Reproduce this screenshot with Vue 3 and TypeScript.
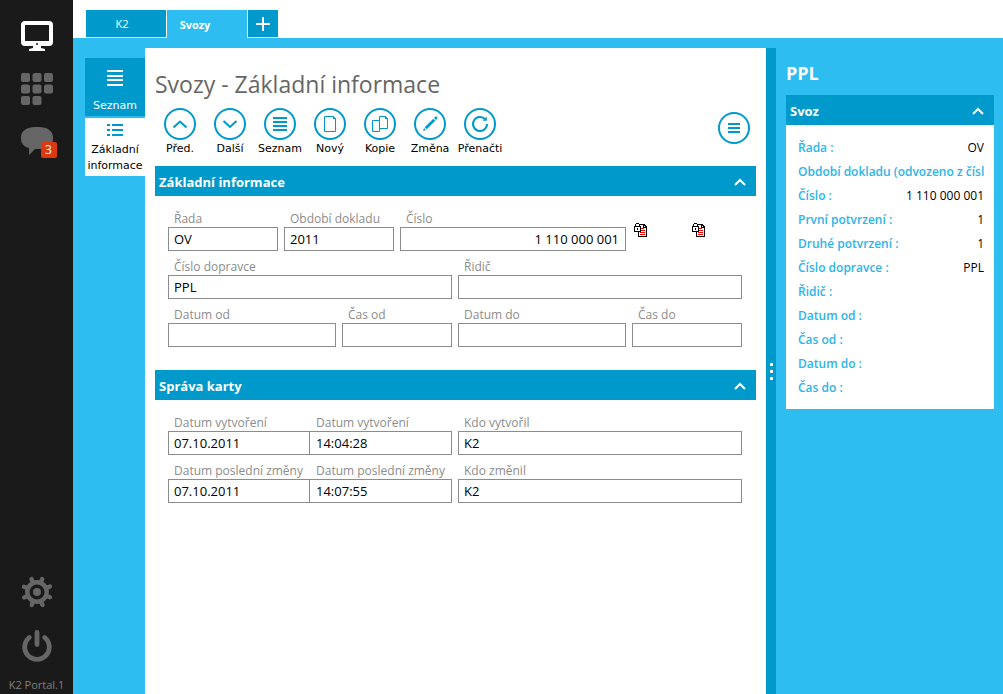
<script setup lang="ts">
import { ref } from 'vue'

interface Field {
  id: string
  label: string
  value: string
  span: string
  numeric?: boolean
}

interface Tool {
  name: string
  label: string
}

interface Detail {
  label: string
  value: string
}

const tools: Tool[] = [
  { name: 'up', label: 'Před.' },
  { name: 'down', label: 'Další' },
  { name: 'list', label: 'Seznam' },
  { name: 'new', label: 'Nový' },
  { name: 'copy', label: 'Kopie' },
  { name: 'edit', label: 'Změna' },
  { name: 'reload', label: 'Přenačti' },
]

const basicFields = ref<Field[]>([
  { id: 'rada', label: 'Řada', value: 'OV', span: 's2' },
  { id: 'obdobi', label: 'Období dokladu', value: '2011', span: 's2' },
  { id: 'cislo', label: 'Číslo', value: '1 110 000 001', span: 's4', numeric: true },
])

const planFields = ref<Field[]>([
  { id: 'dopravce', label: 'Číslo dopravce', value: 'PPL', span: 's5' },
  { id: 'ridic', label: 'Řidič', value: '', span: 's5' },
  { id: 'datum-od', label: 'Datum od', value: '', span: 's3' },
  { id: 'cas-od', label: 'Čas od', value: '', span: 's2' },
  { id: 'datum-do', label: 'Datum do', value: '', span: 's3' },
  { id: 'cas-do', label: 'Čas do', value: '', span: 's2' },
])

const auditRows = ref([
  {
    stamps: [
      { id: 'vytvoreni-datum', label: 'Datum vytvoření', value: '07.10.2011' },
      { id: 'vytvoreni-cas', label: 'Datum vytvoření', value: '14:04:28' },
    ],
    user: { id: 'vytvoril', label: 'Kdo vytvořil', value: 'K2' },
  },
  {
    stamps: [
      { id: 'zmena-datum', label: 'Datum poslední změny', value: '07.10.2011' },
      { id: 'zmena-cas', label: 'Datum poslední změny', value: '14:07:55' },
    ],
    user: { id: 'zmenil', label: 'Kdo změnil', value: 'K2' },
  },
])

const details: Detail[] = [
  { label: 'Řada :', value: 'OV' },
  { label: 'Období dokladu (odvozeno z čísla) :', value: '' },
  { label: 'Číslo :', value: '1 110 000 001' },
  { label: 'První potvrzení :', value: '1' },
  { label: 'Druhé potvrzení :', value: '1' },
  { label: 'Číslo dopravce :', value: 'PPL' },
  { label: 'Řidič :', value: '' },
  { label: 'Datum od :', value: '' },
  { label: 'Čas od :', value: '' },
  { label: 'Datum do :', value: '' },
  { label: 'Čas do :', value: '' },
]

const gearAngles = [22, 67, 112, 157, 202, 247, 292, 337]
</script>

<template>
  <div class="app">
    <nav class="rail" aria-label="Portál">
      <button class="rail-btn" type="button" aria-label="Plocha">
        <svg width="32" height="30" viewBox="0 0 32 30">
          <path fill="#fff" fill-rule="evenodd" d="M4 0h24a4 4 0 0 1 4 4v17a4 4 0 0 1-4 4h-8v2l4 1v2H8v-2l4-1v-2H4a4 4 0 0 1-4-4V4a4 4 0 0 1 4-4zM4 4v16h24V4z" />
          <circle cx="16" cy="23" r="1" fill="#1a1a1a" />
        </svg>
      </button>
      <button class="rail-btn" type="button" aria-label="Aplikace">
        <svg width="32" height="32" viewBox="0 0 32 32" fill="#666">
          <rect x="0" y="0" width="9" height="9" rx="2" /><rect x="11.500" y="0" width="9" height="9" rx="2" /><rect x="23" y="0" width="9" height="9" rx="2" />
          <rect x="0" y="11.500" width="9" height="9" rx="2" /><rect x="11.500" y="11.500" width="9" height="9" rx="2" /><rect x="23" y="11.500" width="9" height="9" rx="2" />
          <rect x="0" y="23" width="9" height="9" rx="2" /><rect x="11.500" y="23" width="9" height="9" rx="2" />
        </svg>
      </button>
      <button class="rail-btn" type="button" aria-label="Zprávy">
        <svg width="32" height="28" viewBox="0 0 32 28">
          <path fill="#666" d="M14 0h4c8 0 14 4 14 10v2c0 6-5 10-13 10h-5l-6 6v-7c-5-1-8-5-8-9v-2C0 4 6 0 14 0z" />
        </svg>
        <span class="badge">3</span>
      </button>
      <div class="rail-fill"></div>
      <button class="rail-btn" type="button" aria-label="Nastavení">
        <svg width="32" height="32" viewBox="0 0 32 32" fill="none" stroke="#666">
          <circle cx="16" cy="16" r="9.700" stroke-width="4.400" />
          <g stroke-width="4.400" stroke-linecap="round">
            <path v-for="a in gearAngles" :key="a" d="M16 5V2" :transform="`rotate(${a} 16 16)`" />
          </g>
          <circle cx="16" cy="16" r="4" fill="#666" stroke="none" />
        </svg>
      </button>
      <button class="rail-btn" type="button" aria-label="Odhlásit">
        <svg width="32" height="32" viewBox="0 0 32 32" fill="none" stroke="#666" stroke-width="4.800" stroke-linecap="round">
          <path d="M8.300 7.500a12.300 12.300 0 1 0 15.400 0M16 2.400v12.200" />
        </svg>
      </button>
      <span class="version">K2 Portal.1</span>
    </nav>

    <div class="work">
      <header class="tabs">
        <button class="tab" type="button">K2</button>
        <button class="tab active" type="button">Svozy</button>
        <button class="tab add" type="button" aria-label="Nová záložka">
          <svg width="14" height="14" viewBox="0 0 14 14" fill="#fff"><path d="M6 0h2v6h6v2H8v6H6V8H0V6h6z" /></svg>
        </button>
      </header>

      <div class="stage">
        <nav class="views" aria-label="Pohledy">
          <button class="view dark" type="button">
            <svg width="16" height="16" viewBox="0 0 16 16" fill="#fff"><path d="M0 0h16v2H0zM0 5h16v2H0zM0 9h16v2H0zM0 14h16v2H0z" /></svg>
            <span>Seznam</span>
          </button>
          <button class="view light" type="button">
            <svg width="16" height="12" viewBox="0 0 16 12" fill="#0099cc"><path d="M0 0h3v2H0zM5 0h11v2H5zM0 5h3v2H0zM5 5h11v2H5zM0 10h3v2H0zM5 10h11v2H5z" /></svg>
            <span>Základní informace</span>
          </button>
        </nav>

        <main class="panel">
          <h1>Svozy - Základní informace</h1>
          <div class="toolbar">
            <button v-for="t in tools" :key="t.name" class="tool" type="button">
              <svg width="32" height="32" viewBox="0 0 32 32" fill="none" stroke="#0099cc" stroke-width="2">
                <circle cx="16" cy="16" r="15" />
                <path v-if="t.name === 'up'" d="M9.500 19.500l6.500-6 6.500 6" />
                <path v-else-if="t.name === 'down'" d="M9.500 13l6.500 6 6.500-6" />
                <path v-else-if="t.name === 'list'" d="M9 10h14M9 14h14M9 18h14M9 22h14" />
                <g v-else-if="t.name === 'new'" stroke-width="1">
                  <path d="M10.500 8.500h9l2 2v13h-11z" />
                  <path d="M19 8v3h3z" fill="#0099cc" stroke="none" />
                </g>
                <g v-else-if="t.name === 'copy'" stroke-width="1">
                  <path d="M15.500 12.500h-7v11h7v-3" />
                  <path d="M15.500 8.500h6l2 2v10h-8z" />
                  <path d="M21 8v3h3z" fill="#0099cc" stroke="none" />
                </g>
                <g v-else-if="t.name === 'edit'" fill="#0099cc" stroke="none">
                  <path d="M9 23l1-3 2 2zM10.700 19.300l8.600-8.600 2 2-8.600 8.600zM20 10l1.200-1.200c.5-.5 1-.5 1.500 0l.5.5c.5.5.5 1 0 1.500L22 12z" />
                </g>
                <g v-else>
                  <path d="M21.300 11.400a7 7 0 1 0 1.700 4.600" />
                  <path d="M18.500 12.800h4.300V8.500z" fill="#0099cc" stroke="none" />
                </g>
              </svg>
              <span>{{ t.label }}</span>
            </button>
            <button class="menu" type="button" aria-label="Nabídka">
              <svg width="32" height="32" viewBox="0 0 32 32" fill="none" stroke="#0099cc" stroke-width="2">
                <circle cx="16" cy="16" r="15" /><path d="M10 12h12M10 16h12M10 20h12" />
              </svg>
            </button>
          </div>

          <section>
            <button class="bar" type="button">
              <span>Základní informace</span>
              <svg width="12" height="8" viewBox="0 0 12 8" fill="none" stroke="#fff" stroke-width="2"><path d="M1 7l5-5 5 5" /></svg>
            </button>
            <div class="grid">
              <div v-for="f in basicFields" :key="f.id" class="field" :class="f.span">
                <label :for="f.id">{{ f.label }}</label>
                <input :id="f.id" v-model="f.value" type="text" :class="{ numeric: f.numeric }" />
              </div>
              <div v-for="n in 2" :key="n" class="lock">
                <svg width="13" height="14" viewBox="0 0 13 14" shape-rendering="crispEdges">
                  <path d="M4 1h6l3 3v10H4z" fill="#000" />
                  <path d="M5 2h4v3h3v8H5zM10 3h1v1h-1z" fill="#fff" />
                  <path d="M7 5h3v1H7zM7 7h4v1H7zM6 9h5v1H6zM6 11h5v1H6z" fill="#f00" />
                  <path d="M2 0h3v1h1v2h1v6H0V3h1V1h1z" fill="#000" />
                  <path d="M2 1h3v2H2zM1 4h5v4H1z" fill="#fff" />
                  <path d="M3 5h1v2H3z" fill="#000" />
                </svg>
              </div>
              <div v-for="f in planFields" :key="f.id" class="field" :class="f.span">
                <label :for="f.id">{{ f.label }}</label>
                <input :id="f.id" v-model="f.value" type="text" />
              </div>
            </div>
          </section>

          <section>
            <button class="bar" type="button">
              <span>Správa karty</span>
              <svg width="12" height="8" viewBox="0 0 12 8" fill="none" stroke="#fff" stroke-width="2"><path d="M1 7l5-5 5 5" /></svg>
            </button>
            <div class="grid">
              <template v-for="row in auditRows" :key="row.user.id">
                <div class="pair s5">
                  <div v-for="s in row.stamps" :key="s.id" class="field">
                    <label :for="s.id">{{ s.label }}</label>
                    <input :id="s.id" v-model="s.value" type="text" />
                  </div>
                </div>
                <div class="field s5">
                  <label :for="row.user.id">{{ row.user.label }}</label>
                  <input :id="row.user.id" v-model="row.user.value" type="text" />
                </div>
              </template>
            </div>
          </section>
        </main>

        <div class="splitter"><i></i><i></i><i></i></div>

        <aside class="side">
          <h2>PPL</h2>
          <button class="bar" type="button">
            <span>Svoz</span>
            <svg width="12" height="8" viewBox="0 0 12 8" fill="none" stroke="#fff" stroke-width="2"><path d="M1 7l5-5 5 5" /></svg>
          </button>
          <dl class="details">
            <div v-for="d in details" :key="d.label">
              <dt>{{ d.label }}</dt>
              <dd>{{ d.value }}</dd>
            </div>
          </dl>
        </aside>
      </div>
    </div>
  </div>
</template>

<style>
body {
  margin: 0;
}
</style>

<style scoped>
.app {
  display: flex;
  min-height: 100vh;
  font-family: "Open Sans", "Noto Sans", sans-serif;
  font-size: 13px;
  color: #000;
}
.app * {
  box-sizing: border-box;
}
button {
  border: 0;
  padding: 0;
  background: none;
  font: inherit;
  color: inherit;
  cursor: pointer;
}
svg {
  display: block;
  flex: none;
}

.rail {
  flex: none;
  width: 73px;
  background: #1a1a1a;
  display: flex;
  flex-direction: column;
  align-items: center;
  gap: 22px;
  padding-top: 21px;
}
.rail-btn {
  position: relative;
}
.rail-fill {
  flex: 1;
}
.badge {
  position: absolute;
  left: 20px;
  top: 15px;
  width: 16px;
  height: 16px;
  border-radius: 2px;
  background: #dc3912;
  color: #fff;
  font-size: 12px;
  line-height: 16px;
  text-align: center;
}
.version {
  font-size: 11px;
  line-height: 16px;
  color: #808080;
  margin-bottom: 1px;
  margin-top: -7px;
}

.work {
  flex: 1;
  min-width: 0;
  display: flex;
  flex-direction: column;
}
.tabs {
  display: flex;
  gap: 1px;
  height: 38px;
  padding: 10px 0 0 13px;
  background: #fff;
}
.tab {
  width: 80px;
  height: 27px;
  background: #0099cc;
  color: #fff;
  font-size: 11px;
  padding-right: 8px;
}
.tab.active {
  height: 28px;
  background: #2dbdf0;
  font-weight: 700;
  padding-right: 24px;
}
.tab.add {
  width: 30px;
  padding: 0;
  display: flex;
  align-items: center;
  justify-content: center;
}

.stage {
  flex: 1;
  display: flex;
  background: #2dbdf0;
  padding: 10px 0 0 12px;
}
.views {
  flex: none;
  width: 60px;
  padding-top: 10px;
  display: flex;
  flex-direction: column;
  gap: 2px;
  font-family: "DejaVu Sans", sans-serif;
  font-size: 11px;
  line-height: 16px;
}
.view {
  display: flex;
  flex-direction: column;
  align-items: center;
}
.view.dark {
  height: 58px;
  padding-top: 12px;
  gap: 12px;
  background: #0099cc;
  color: #fff;
}
.view.light {
  height: 58px;
  padding-top: 6px;
  gap: 6px;
  background: #fff;
}

.panel {
  flex: 1;
  min-width: 0;
  background: #fff;
  padding: 20px 10px;
}
h1 {
  margin: 0;
  font-size: 23px;
  line-height: 32px;
  font-weight: 400;
  color: #666;
  white-space: nowrap;
}
.toolbar {
  display: flex;
  padding-top: 8px;
  height: 66px;
  font-family: "DejaVu Sans", sans-serif;
  font-size: 11px;
  line-height: 16px;
}
.tool {
  width: 50px;
  display: flex;
  flex-direction: column;
  align-items: center;
  gap: 1px;
  height: 49px;
}
.menu {
  margin: 4px 6px 0 auto;
  height: 32px;
}

.bar {
  width: 100%;
  height: 30px;
  padding: 1px 10px 0 4px;
  display: flex;
  align-items: center;
  justify-content: space-between;
  background: #0099cc;
  color: #fff;
  font-size: 13px;
  font-weight: 700;
}
.grid {
  display: grid;
  grid-template-columns: repeat(10, minmax(0, 1fr));
  gap: 6px;
  padding: 14px 14px 23px 13px;
}
.s2 { grid-column: span 2; }
.s3 { grid-column: span 3; }
.s4 { grid-column: span 4; }
.s5 { grid-column: span 5; }
.field {
  min-width: 0;
}
.field label {
  display: block;
  margin: 0 6px;
  line-height: 17px;
  font-size: 12px;
  color: #8c8c8c;
  white-space: nowrap;
  overflow: hidden;
}
.field + .field label,
.field label {
  height: 17px;
}
.field input {
  display: block;
  width: 100%;
  height: 24px;
  margin: 0;
  padding: 0 5px;
  border: 1px solid #8c8c8c;
  border-radius: 0;
  background: #fff;
  font: inherit;
  color: #000;
}
.grid {
  row-gap: 7px;
}
.field input.numeric {
  text-align: right;
  padding-right: 6px;
}
.pair {
  display: grid;
  grid-template-columns: repeat(2, minmax(0, 1fr));
}
.pair .field + .field input {
  border-left: 0;
  padding-left: 6px;
}
.lock {
  padding: 13px 0 0 2px;
}

.splitter {
  flex: none;
  width: 10px;
  background: #0099cc;
  display: flex;
  flex-direction: column;
  align-items: center;
  justify-content: center;
  gap: 4px;
}
.splitter i {
  width: 3px;
  height: 3px;
  background: #fff;
}

.side {
  flex: none;
  width: 227px;
  padding: 12px 9px 0 10px;
}
h2 {
  margin: 0 0 9px;
  font-size: 18px;
  line-height: 26px;
  font-weight: 700;
  color: #fff;
}
.details {
  margin: 0;
  padding: 11px 10px 9px 12px;
  background: #fff;
  font-size: 12px;
  line-height: 24px;
}
.details div {
  display: flex;
  overflow: hidden;
  height: 24px;
  white-space: nowrap;
}
.details dt {
  font-weight: 600;
  color: #2db4e8;
}
.details dd {
  margin: 0 0 0 auto;
}
</style>
